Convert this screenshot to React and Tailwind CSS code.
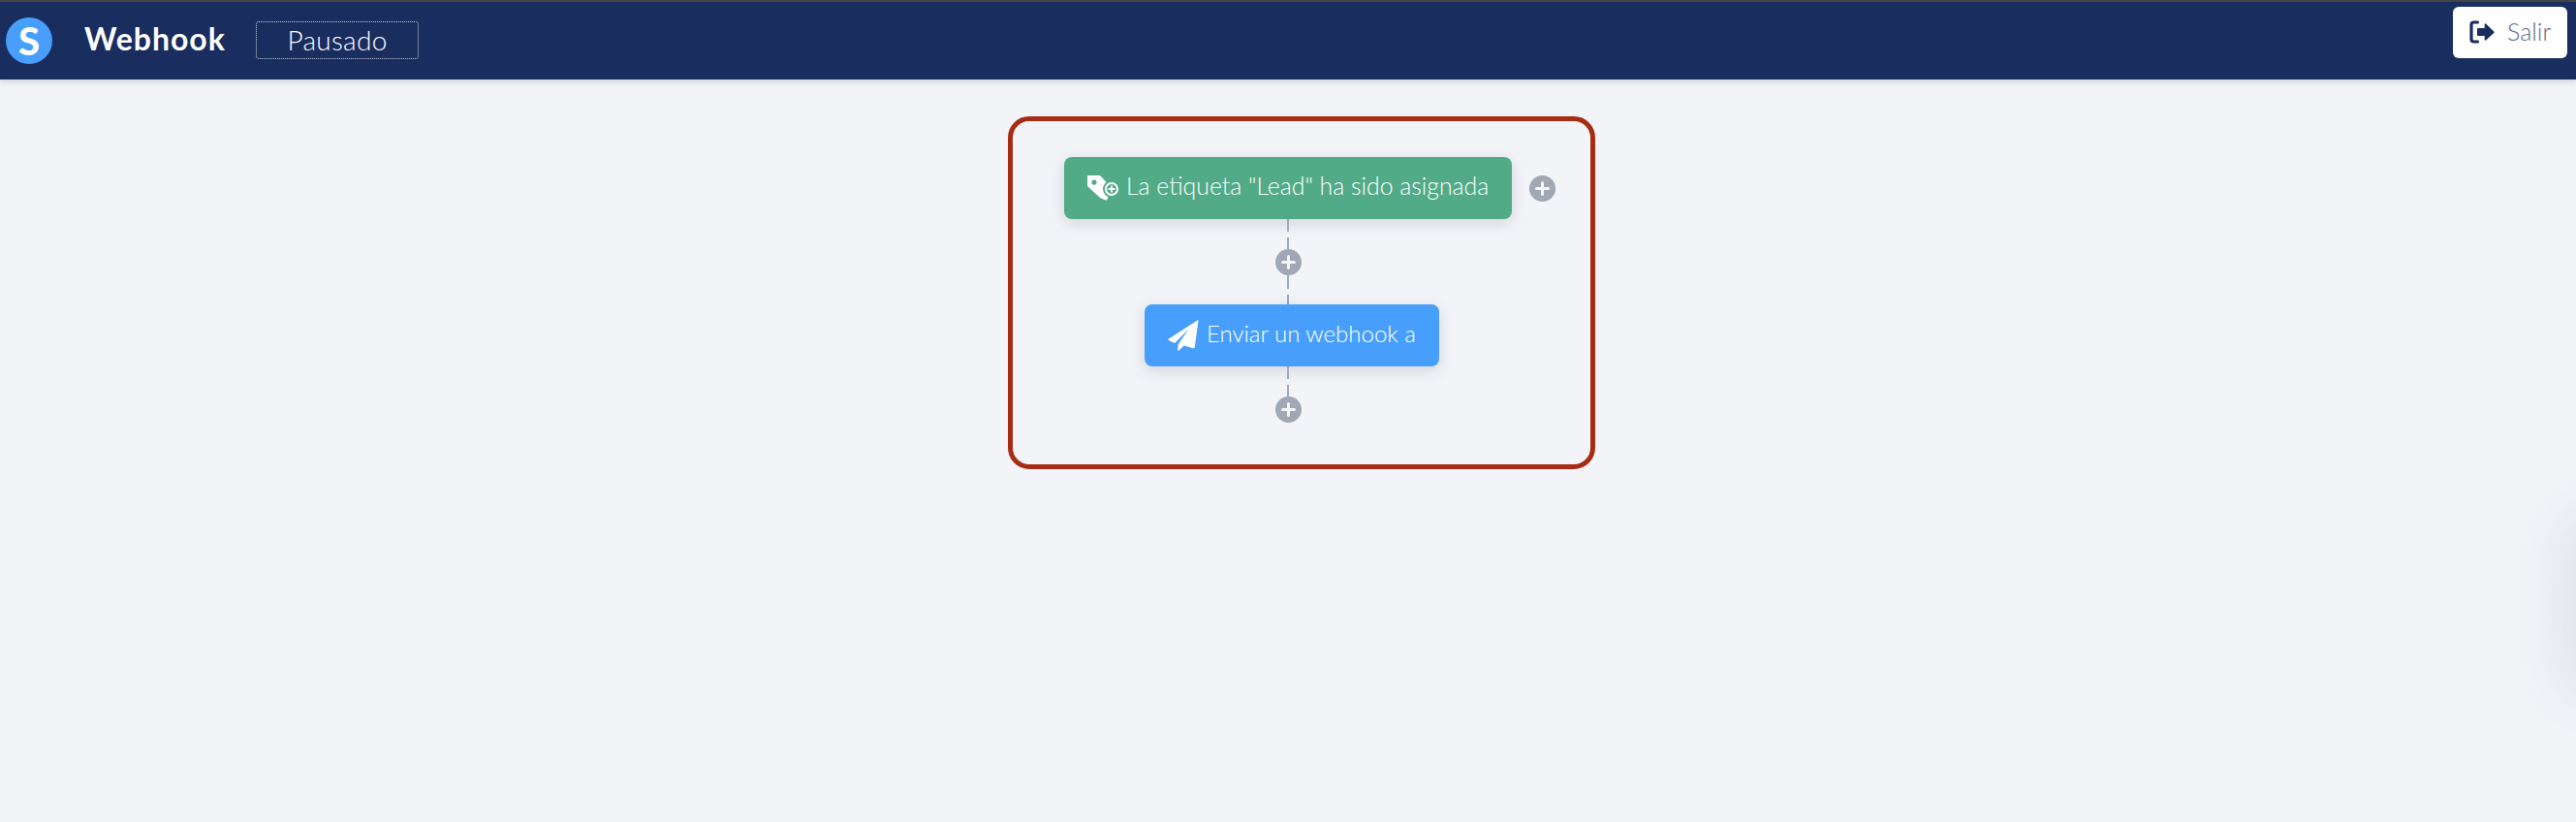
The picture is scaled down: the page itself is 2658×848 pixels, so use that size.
import React from 'react'

function PlusDot() {
  return (
    <div className="w-[27px] h-[27px] rounded-full bg-[#9fa8b3] flex items-center justify-center shrink-0">
      <svg width="15" height="15" viewBox="0 0 15 15">
        <path d="M7.5 1.5v12M1.5 7.5h12" stroke="#f3f5f9" strokeWidth="3" strokeLinecap="round" />
      </svg>
    </div>
  )
}

function Dash({ className }) {
  return <div className={`w-[2px] bg-[#9fabb8] ${className}`} />
}

function TagIcon() {
  return (
    <svg width="32" height="26" viewBox="0 0 32 26" className="shrink-0">
      <path
        fillRule="evenodd"
        d="M1 0h11c.8 0 1.4.3 2 .9L25 13l-4.5 11.6c-.3.9-1 1.2-1.8.9l-4.7-1.9c-.5-.2-.8-.4-1.2-.8L.8 11.8C.3 11.3 0 10.7 0 10V1c0-.6.4-1 1-1zM7 4.5a2.6 2.6 0 1 0 0 5.2 2.6 2.6 0 0 0 0-5.2z"
        fill="#fff"
      />
      <circle cx="25" cy="14" r="9" fill="#52ab87" />
      <circle cx="25" cy="14" r="6" fill="none" stroke="#fff" strokeWidth="2" />
      <path d="M25 10.5v7M21.5 14h7" stroke="#fff" strokeWidth="1.8" />
    </svg>
  )
}

function PlaneIcon() {
  return (
    <svg width="32" height="32" viewBox="0 0 34 32" preserveAspectRatio="none" className="shrink-0">
      <path
        d="M32.5.5 1 19.5c-.8.6-.7 1.4.2 1.8l6.3 2.7L23 9.5 11.5 25l-.8 5.7c-.1 1 .8 1.4 1.5.8l5.5-5 10 2.7c1 .2 1.8-.3 1.8-1.2L33.5 1c0-.6-.5-.8-1-.5z"
        fill="#fff"
      />
    </svg>
  )
}

function ExitIcon() {
  return (
    <svg width="26" height="24" viewBox="0 0 26 24" className="shrink-0">
      <path d="M8.5 2H4.5C3 2 2 3 2 4.5v15C2 21 3 22 4.5 22h4" fill="none" stroke="#1a2d5f" strokeWidth="3.2" strokeLinecap="round" />
      <path d="M17 3.5c-.6-.5-1.3-.1-1.3.6V8H9c-.6 0-1 .4-1 1v6c0 .6.4 1 1 1h6.7v3.9c0 .7.7 1.1 1.3.6l8.3-7.6c.4-.4.4-1 0-1.4L17 3.5z" fill="#1a2d5f" />
    </svg>
  )
}

export default function App() {
  return (
    <div className="relative h-[848px] w-[2658px] overflow-hidden bg-[#f3f4f8] font-['Lato',sans-serif]">
      {/* Top bar */}
      <header className="relative z-10 h-[82px] border-t-2 border-[#444444] bg-[#1a2d5f] shadow-[0_2px_6px_rgba(26,45,95,0.2)] flex items-start">
        <div className="mt-4 ml-[6px] w-12 h-12 rounded-full bg-[#489ffb] flex items-center justify-center text-white text-[40px] font-black leading-none">
          S
        </div>
        <div className="ml-[33px] mt-[18px] w-[144px] text-white text-[32px] font-bold leading-[40px] tracking-[1px] whitespace-nowrap">Webhook</div>
        <div className="ml-[33px] mt-5 w-[168px] h-[39px] rounded-[3px] border border-dotted border-[#c9cfdc] flex items-center justify-center text-white text-[28px] font-light leading-none pb-[2px] tracking-[0.3px]">
          Pausado
        </div>
        <button className="ml-auto mr-[9px] mt-[5px] w-[118px] h-[53px] rounded-md bg-white flex items-center pl-[17px] gap-[13px] text-[#5f6a8a] text-[25px] font-light pb-[1px]">
          <ExitIcon />
          Salir
        </button>
      </header>

      {/* Flow diagram */}
      <div className="ml-[1040px] mt-[38px] w-[606px] h-[364px] rounded-[22px] border-[5px] border-[#a82c14] pl-[53px] pt-[37px]">
        <div className="flex items-center">
          <div className="w-[462px] h-[64px] rounded-lg bg-[#52ab87] shadow-[0_4px_16px_rgba(60,70,100,0.18)] flex items-center pl-[24px] gap-[8px] text-white text-[24.8px] font-light whitespace-nowrap">
            <TagIcon />
            <span className="pb-[5px]">La etiqueta "Lead" ha sido asignada</span>
          </div>
          <div className="ml-[18px]">
            <PlusDot />
          </div>
        </div>
        <div className="w-[462px] flex flex-col">
          <div className="ml-[230px] w-[2px] flex flex-col items-center">
            <Dash className="h-[13px] shrink-0" />
            <Dash className="h-[12px] mt-[6px] shrink-0" />
            <div className="shrink-0"><PlusDot /></div>
            <Dash className="h-[14px] shrink-0" />
            <Dash className="h-[10px] mt-[6px] shrink-0" />
          </div>
          <div className="ml-[83px] w-[304px] h-[64px] rounded-lg bg-[#489ffb] shadow-[0_4px_16px_rgba(60,70,100,0.18)] flex items-center pl-[24px] gap-[8px] text-white text-[24px] font-light whitespace-nowrap">
            <PlaneIcon />
            <span className="pb-[5px]">Enviar un webhook a</span>
          </div>
          <div className="ml-[230px] w-[2px] flex flex-col items-center">
            <Dash className="h-[13px] shrink-0" />
            <Dash className="h-[12px] mt-[6px] shrink-0" />
            <div className="shrink-0"><PlusDot /></div>
          </div>
        </div>
      </div>

      {/* Shadow of a drawer off the right edge */}
      <div className="absolute right-[-60px] top-[530px] w-[60px] h-[190px] rounded-full shadow-[0_0_70px_rgba(60,70,100,0.16)]" />
    </div>
  )
}
